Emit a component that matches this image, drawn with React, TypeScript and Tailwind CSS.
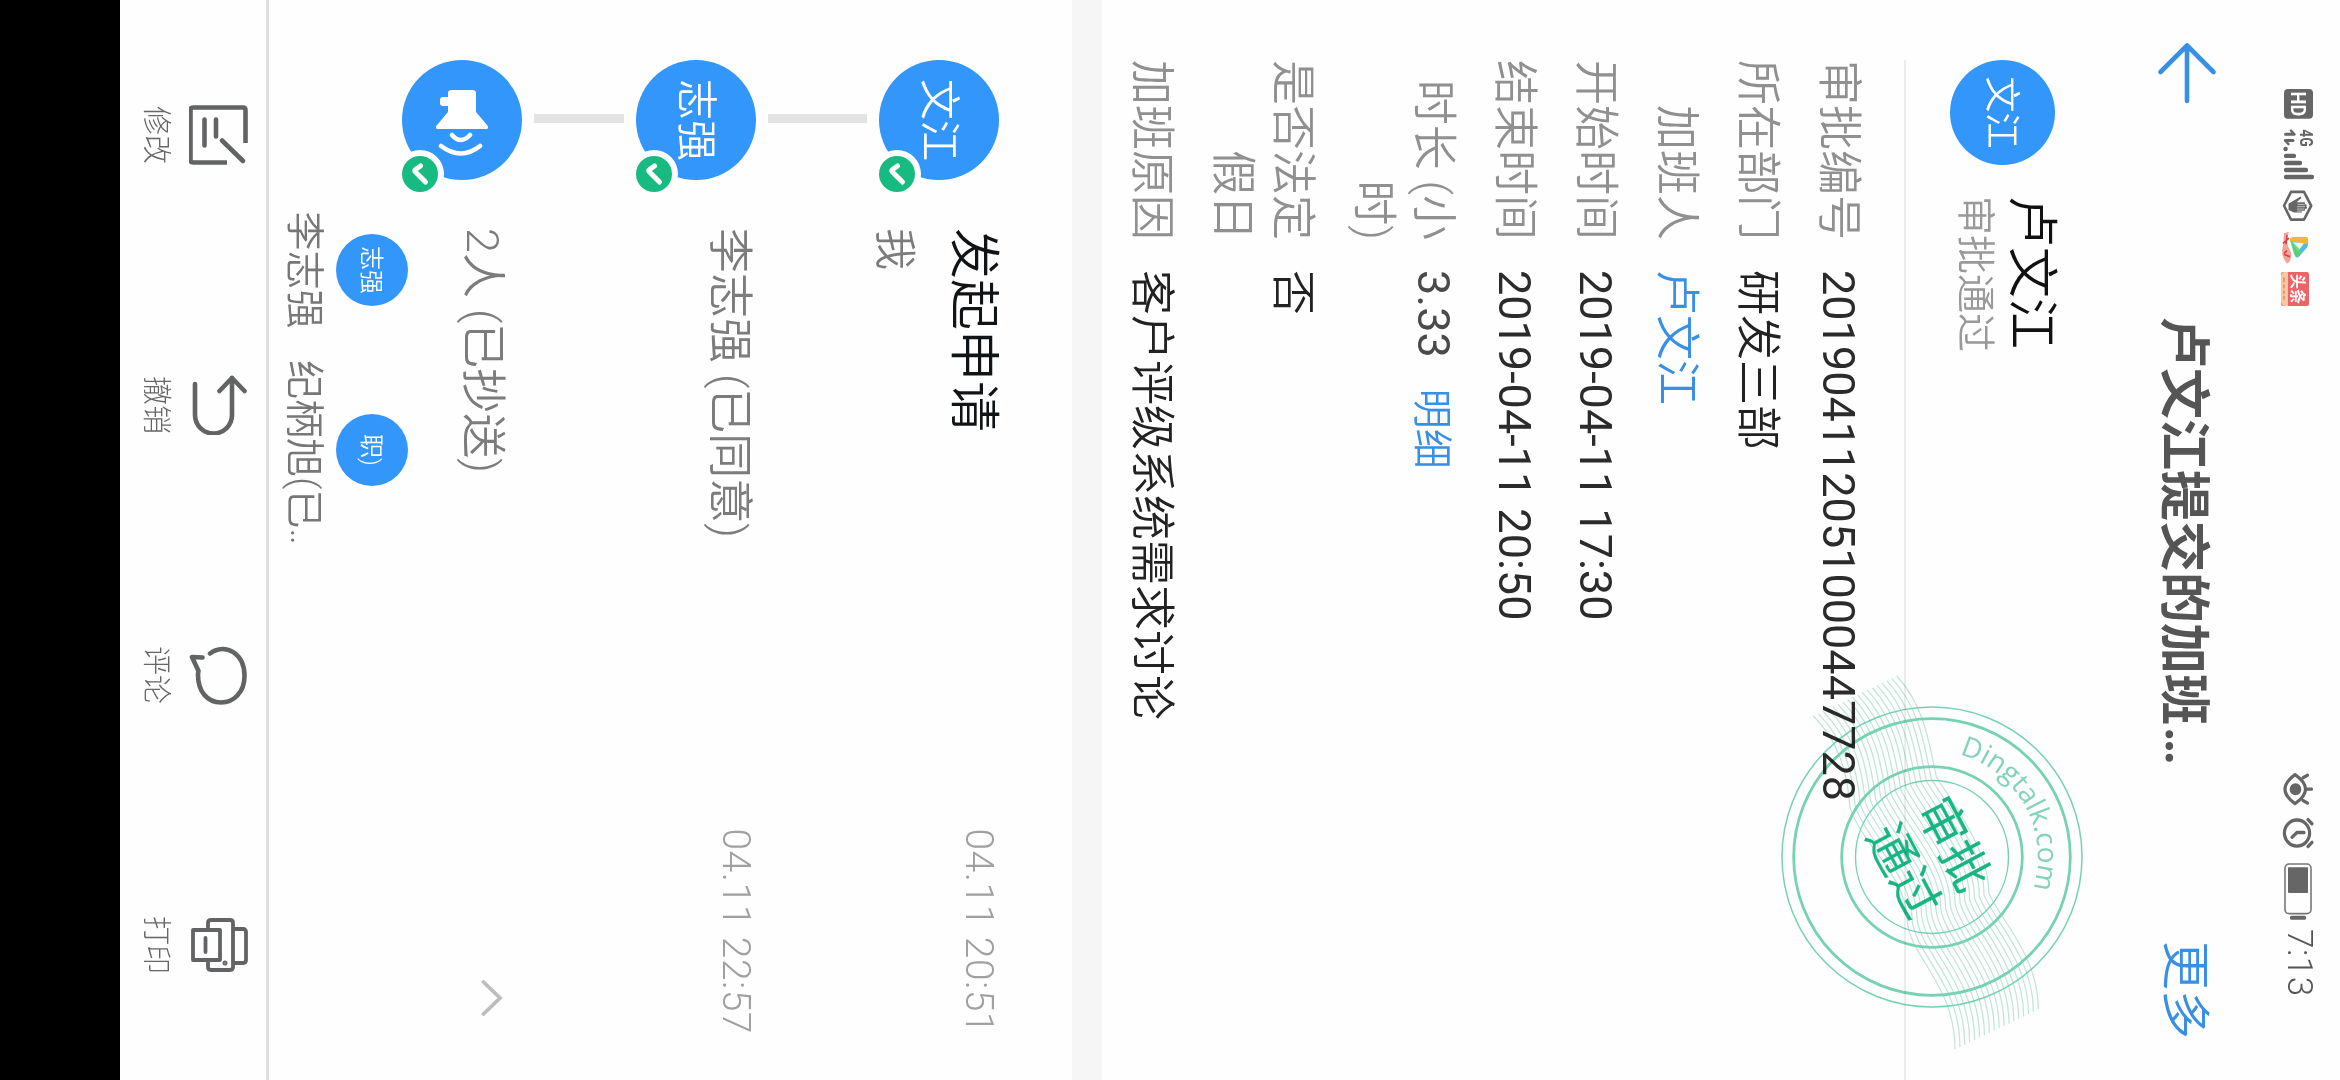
import type { ReactNode } from "react";

type Field = { label: string[]; value: string; style?: string; action?: string };

const fields: Field[] = [
  { label: ["审批编号"], value: "201904112051000447728" },
  { label: ["所在部门"], value: "研发三部", style: "ml-[30px] font-[350] text-[#222]" },
  { label: ["加班人"], value: "卢文江", style: "ml-[30px] font-[350] text-[#378fe6]" },
  { label: ["开始时间"], value: "2019-04-11 17:30" },
  { label: ["结束时间"], value: "2019-04-11 20:50" },
  { label: ["时长 (小", "时)"], value: "3.33", style: "ml-[30px] text-[#4a4a4a]", action: "明细" },
  { label: ["是否法定", "假日"], value: "否", style: "ml-[30px] font-[350] text-[#222]" },
  { label: ["加班原因"], value: "客户评级系统需求讨论", style: "ml-[30px] font-[350] text-[#222]" },
];

function StatusBar() {
  return (
    <div className="flex h-[81px] shrink-0 items-center pl-[87px] text-[#666]">
      <svg width="219" height="36" viewBox="84 22 213 36" preserveAspectRatio="none" className="shrink-0">
        <rect x="86" y="26" width="29" height="29" rx="4" fill="#666" />
        <text x="100.5" y="48" textAnchor="middle" fontSize="20" fontWeight="700" fill="#fff" textLength="24" lengthAdjust="spacingAndGlyphs">HD</text>
        <text x="125" y="39" fontSize="18" fontWeight="700" fill="#666" textLength="17" lengthAdjust="spacingAndGlyphs">4G</text>
        <g stroke="#666" strokeLinecap="round" fill="none">
          <path d="M130 53.5V45.500M136 53V46" strokeWidth="3" />
          <path d="M126.500 48L130 44.500M139.500 50.500L136 54" strokeWidth="2.4" />
          <path d="M144.300 53.300v.2M151 53v-8M158 53V39M164.700 53V33M171.500 53V27" strokeWidth="4.300" />
        </g>
        <path d="M186 35L199.500 27.800L213 35V48L199.500 55L186 48Z" fill="none" stroke="#666" strokeWidth="2.600" strokeLinejoin="round" />
        <path d="M190.500 38.500l1.500-1 4 5V34.500q1-1.300 2 0V33q1-1.300 2 0v-.5q1.200-1.300 2.300 0v2q1-1.300 2 0v3q1-1.300 1.800 0V45l-2.500 5.500h-6Z" fill="#666" />
        <path d="M198.200 34.500v7M200.400 34v8M202.700 35v7M204.700 37v5" stroke="#fefefe" strokeWidth=".6" />
        <path d="M231 32q5-2.500 9 0l9 8q2 3-1 4l-15 4q-3 0-3-4Z" fill="#55b8e8" />
        <path d="M230 32q3-2.500 7 0l-2 12-1 5q-4 1-4-4Z" fill="#f0b53c" />
        <path d="M236 35l8 6-9 6Z" fill="#e9fff0" />
        <path d="M234 47l10-10 6 5-3 3-14 4Z" fill="#62cf64" opacity=".8" />
        <path d="M225 50q7 3 14 1l6-3q8-1 11 4-8 7-17 4l-13-1Z" fill="#f3a49a" />
        <path d="M228 52l9 1M231 50l5 6M243 52l3 3M249 49l-2 6" stroke="#d93f45" strokeWidth="1.600" />
        <rect x="264" y="30" width="33" height="28" rx="2" fill="#ec6468" />
        <path d="M264 51h33v3q0 4-5 4h-23q-5 0-5-4Z" fill="#f9c8a2" />
        <text x="280.500" y="47" textAnchor="middle" fontSize="16" fontWeight="700" fill="#fff" textLength="29" lengthAdjust="spacingAndGlyphs">头条</text>
        <path d="M269 55h5m2 0h4m2 0h3m2 0h4" stroke="#e09a78" strokeWidth="2" />
      </svg>
      <svg width="157" height="36" viewBox="762 22 152 36" preserveAspectRatio="none" className="ml-[463px] shrink-0">
        <g fill="none" stroke="#666" strokeWidth="3.200" strokeLinecap="round">
          <path d="M767.500 44Q781.500 23 795.500 44Q781.500 64 767.500 44Z" strokeLinejoin="round" />
          <path d="M781.500 33V27.500M770.500 36L768 31.500M792.500 36L795 31.500" />
          <circle cx="824" cy="42" r="12.600" />
          <path d="M823.500 35v7l4.500 5" />
          <path d="M811 31l4-4M833 27l4 4" />
        </g>
        <circle cx="781.500" cy="43.500" r="5.800" fill="#666" />
        <rect x="854" y="28" width="48" height="26" rx="4" fill="none" stroke="#777" strokeWidth="1.600" />
        <rect x="857" y="31" width="25" height="20" rx="1" fill="#666" />
        <rect x="904" y="33" width="4" height="16" rx="1.500" fill="#666" />
      </svg>
      <span className="ml-[3px] text-[35px] leading-[36px] font-light tracking-[0.5px] text-[#555]">7:13</span>
    </div>
  );
}

function NavBar() {
  return (
    <div className="flex h-[144px] shrink-0 items-center pr-[41px] pl-[41px]">
      <svg width="64" height="62" viewBox="0 0 64 62" fill="none" stroke="#378fe6" strokeWidth="4.600" strokeLinecap="round" strokeLinejoin="round" className="shrink-0">
        <path d="M4.500 31H60M31 4.500L4.500 31L31 57.500" />
      </svg>
      <h1 className="mt-[7px] ml-[212px] flex-1 text-[51px] leading-[60px] font-bold whitespace-nowrap text-[#555]">
        卢文江提交的加班<span className="ml-0.5 tracking-[-3px]">...</span>
      </h1>
      <span className="mt-[5px] text-[49px] leading-[60px] font-[350] text-[#378fe6]">更多</span>
    </div>
  );
}

function Stamp() {
  const outer = [410, 165, 500, 260, 510, 390, 530, 470, 590, 560, 690, 700, 686, 815, 715, 890, 835, 1000, 835, 1165];
  const inner = [160, 285, 235, 360, 262, 450, 270, 560, 310, 680, 440, 760, 442, 900, 450, 1010, 585, 1090, 585, 1285];
  const lines = Array.from({ length: 18 }, (_, i) => {
    const t = i / 17;
    const p = outer.map((v, k) => (v + (inner[k] - v) * t).toFixed(1));
    return `M${p[0]} ${p[1]}C${p.slice(2, 8).join(" ")}C${p.slice(8, 14).join(" ")}C${p.slice(14).join(" ")}`;
  });
  return (
    <svg className="absolute top-[242px] left-[667px] mix-blend-multiply" width="400" height="330" viewBox="-190 -166 400 330">
      <g transform="rotate(-90) scale(0.33333) translate(-516 -708)" fill="none" stroke="#bfe6da" strokeWidth="3.600">
        {lines.map((d) => (
          <path key={d} d={d} />
        ))}
      </g>
      <g fill="none" stroke="#76d2b6">
        <circle r="150" strokeWidth="1.500" />
        <circle r="138.300" strokeWidth="2.800" />
        <circle r="90.300" strokeWidth="2.800" />
        <circle r="76.500" strokeWidth="1.400" />
      </g>
      <path id="stamp-arc" d="M-102.400 -27.400A106 106 0 0 1 106 0" fill="none" />
      <text fontSize="28" fill="#84d3bc" className="font-['Open_Sans','Noto_Sans',sans-serif]">
        <textPath href="#stamp-arc" textLength="171">
          Dingtalk.com
        </textPath>
      </text>
      <g transform="rotate(-28)" fill="#17b685" fontSize="49" fontWeight="350" textAnchor="middle" stroke="#17b685" strokeWidth=".3">
        <text x="-1" y="-8">审批</text>
        <text x="-1" y="49">通过</text>
      </g>
    </svg>
  );
}

function Header() {
  return (
    <div className="flex h-[209px] shrink-0 pt-[60px] pl-[60px]">
      <div className="flex size-[105px] items-center justify-center rounded-full bg-[#3296fa] pt-[3px] text-[36px] font-[350] text-white">文江</div>
      <div className="ml-[31px]">
        <div className="-mt-[3px] text-[51px] leading-[54px] font-[350] text-[#111]">卢文江</div>
        <div className="mt-[5px] text-[39px] leading-[48px] font-[350] text-[#999]">审批通过</div>
      </div>
    </div>
  );
}

function FieldList() {
  return (
    <div className="ml-[60px] flex h-[804px] shrink-0 flex-col gap-[21px] border-t-2 border-[#ececec] pt-[36px] text-[45px] leading-[60px]">
      {fields.map((f) => (
        <div key={f.value} className="flex">
          <div className="w-[180px] shrink-0 text-right font-[350] whitespace-nowrap text-[#909090]">
            {f.label.map((line) => (
              <div key={line}>{line}</div>
            ))}
          </div>
          <div className={f.style ?? "ml-[30px] text-[#2b2b2b]"}>
            {f.value}
            {f.action && <span className="ml-[31px] text-[40px] font-[350] text-[#378fe6]">{f.action}</span>}
          </div>
        </div>
      ))}
    </div>
  );
}

function TimelineNode({ avatar, connector, children, aside }: { avatar: ReactNode; connector?: string; children: ReactNode; aside: ReactNode }) {
  return (
    <div className="flex pl-[60px]">
      <div className="w-[120px] shrink-0">
        <div className="relative flex size-[120px] items-center justify-center rounded-full bg-[#3296fa] text-[41px] font-[350] text-white">
          {avatar}
          <span className="absolute top-[78px] left-[90px] flex size-12 items-center justify-center rounded-full bg-[#fefefe]">
            <svg width="36" height="36" viewBox="0 0 36 36">
              <circle cx="18" cy="18" r="18" fill="#17bb82" />
              <path d="M10 17.500L13.500 22.500Q14.500 24 16 22.500L26 12.500" fill="none" stroke="#fefefe" strokeWidth="5" strokeLinecap="round" strokeLinejoin="round" />
            </svg>
          </span>
        </div>
        {connector && <div className={connector} />}
      </div>
      <div className="flex-1">{children}</div>
      <div className="mt-px mr-[46px] text-[39px] leading-[38px] font-light tracking-[0.5px] text-[#a0a0a0]">{aside}</div>
    </div>
  );
}

function Person({ short, name }: { short: string; name: ReactNode }) {
  return (
    <div className="flex w-[180px] flex-col items-center">
      <div className="flex size-[72px] items-center justify-center rounded-full bg-[#3296fa] pt-0.5 text-[24px] font-[350] text-white">{short}</div>
      <div className="mt-[7px] max-w-full text-[39px] leading-[50px] font-[350] whitespace-nowrap text-[#777]">{name}</div>
    </div>
  );
}

function Timeline() {
  return (
    <div className="flex flex-1 flex-col overflow-hidden border-t-[30px] border-[#f6f6f6] pt-[73px]">
      <TimelineNode
        avatar={<span className="mt-0.5">文江</span>}
        connector="mt-3 mb-3 ml-[54px] h-[99px] w-[9px] bg-[#e3e3e3]"
        aside="04.11 20:51"
      >
        <div className="mt-0.5 pl-12 text-[51px] leading-[48px] font-[350] text-[#111417]">发起申请</div>
        <div className="mt-[31px] pl-12 text-[42px] leading-[48px] font-[350] text-[#7c7c7c]">我</div>
      </TimelineNode>
      <TimelineNode
        avatar={<span className="mt-0.5">志强</span>}
        connector="mt-3 mb-3 ml-[54px] h-[90px] w-[9px] bg-[#e3e3e3]"
        aside="04.11 22:57"
      >
        <div className="mt-px pl-12 text-[45px] leading-[52px] font-[350] text-[#7c7c7c]">李志强 (已同意)</div>
      </TimelineNode>
      <TimelineNode
        avatar={
          <svg width="68" height="54" viewBox="89 1851 68 54" fill="#fff" className="ml-1.5">
            <path d="M93 1864H112L125 1853Q129 1850 129 1855V1901Q129 1906 125 1903L112 1892H106V1897Q106 1900 103 1900H100Q97 1900 97 1897V1892H93Q90 1892 90 1888V1868Q90 1864 93 1864Z" />
            <path d="M135 1870Q145 1879.500 135 1888M146 1860Q161 1879 146 1899" fill="none" stroke="#fff" strokeWidth="4.500" strokeLinecap="round" />
          </svg>
        }
        aside={
          <svg width="36" height="22" viewBox="0 0 36 22" fill="none" stroke="#bdbdbd" strokeWidth="3.800" strokeLinecap="round" className="mt-[18px] mr-[18px]">
            <path d="M2 19.500L18 3L34 19.500" />
          </svg>
        }
      >
        <div className="mt-0.5 pl-12 text-[45px] leading-[76px] font-[350] text-[#7c7c7c]">2人 (已抄送)</div>
        <div className="mt-[36px] flex">
          <Person short="志强" name="李志强" />
          <Person short="职)" name={<>纪柄旭(已<span className="tracking-[-2px]">..</span></>} />
        </div>
      </TimelineNode>
    </div>
  );
}

const actions: { label: string; icon: ReactNode }[] = [
  {
    label: "修改",
    icon: (
      <>
        <path d="M38 3.500H5Q2.500 3.500 2.500 6V56Q2.500 58.500 5 58.500H55Q57.500 58.500 57.500 56V22" />
        <path d="M35.500 27L56 6M14.500 33H31.500M14.500 44.500H40.500" strokeLinecap="round" />
      </>
    ),
  },
  {
    label: "撤销",
    icon: (
      <>
        <path d="M3 17H40A18.500 18.500 0 0 1 40 54H9" strokeLinecap="round" />
        <path d="M16 4.500L3 17L16 29.500" strokeLinecap="round" strokeLinejoin="round" />
      </>
    ),
  },
  {
    label: "评论",
    icon: (
      <>
        <path d="M8.500 39C-3 23 9 4.500 31 4.500C47 4.500 57.500 15 57.500 28C57.500 42 46 51 30 51Q28 51 26 50.500L12 57L12.500 46.500" strokeLinecap="round" strokeLinejoin="round" />
      </>
    ),
  },
  {
    label: "打印",
    icon: (
      <g strokeLinejoin="round" strokeWidth="3.800">
        <path d="M14 16V6Q14 3 17 3H45Q48 3 48 6V16" />
        <path d="M14 41H8Q5 41 5 38V19Q5 16 8 16H52Q55 16 55 19V38Q55 41 52 41H46" />
        <rect x="15" y="29" width="30" height="27" />
        <path d="M23 43.500H37" strokeLinecap="round" />
        <circle cx="48" cy="24" r="1" strokeWidth="3" />
      </g>
    ),
  },
];

function ActionBar() {
  return (
    <div className="grid h-[149px] shrink-0 grid-cols-4 border-t-[3px] border-[#dedede]">
      {actions.map((a) => (
        <div key={a.label} className="flex flex-col items-center pt-[17px]">
          <svg width="60" height="60" viewBox="0 0 60 60" fill="none" stroke="#626365" strokeWidth="4.600">
            {a.icon}
          </svg>
          <span className="mt-[13px] text-[29px] leading-[40px] font-light text-[#666]">{a.label}</span>
        </div>
      ))}
    </div>
  );
}

export default function App() {
  return (
    <div className="h-[1080px] w-[2340px] overflow-hidden bg-black">
      <div className="relative flex h-[2340px] w-[1080px] origin-top-left translate-x-[2340px] rotate-90 flex-col bg-black pb-[120px] font-['Roboto','Noto_Sans_CJK_SC',sans-serif]">
        <div className="flex min-h-0 flex-1 flex-col bg-[#fefefe]">
          <StatusBar />
          <NavBar />
          <Header />
          <FieldList />
          <Timeline />
          <ActionBar />
        </div>
        <Stamp />
      </div>
    </div>
  );
}
